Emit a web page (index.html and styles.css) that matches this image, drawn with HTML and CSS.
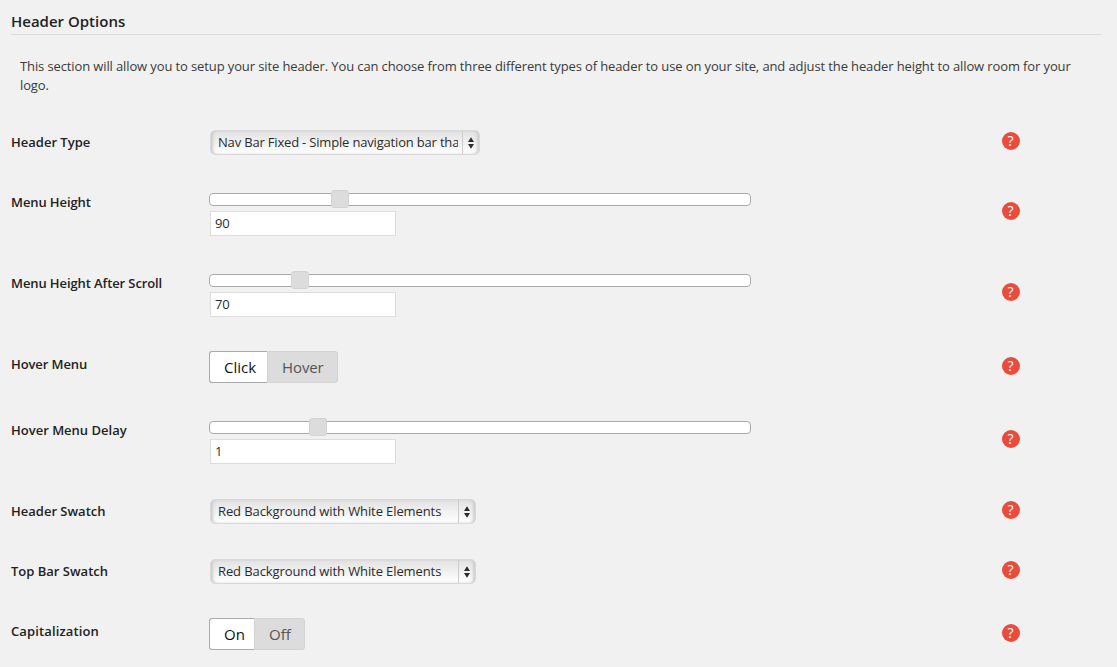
FILE: index.html
```
<!DOCTYPE html>
<html lang="en">
<head>
<meta charset="utf-8">
<title>Header Options</title>
<link rel="stylesheet" href="styles.css">
</head>
<body>
<main class="options">
  <h3 class="title">Header Options</h3>
  <p class="intro">This section will allow you to setup your site header. You can choose from three different types of header to use on your site, and adjust the header height to allow room for your logo.</p>
  <div class="row row-select">
    <div class="label">Header Type</div>
    <div class="control"><div class="select select-wide"><span class="value">Nav Bar Fixed - Simple navigation bar tha</span><span class="arrows"><svg width="6" height="12" viewBox="0 0 6 12"><path d="M3 .3 6 5H0zM3 11.7 0 7h6z"/></svg></span></div></div>
    <div class="help">?</div>
  </div>
  <div class="row row-slider">
    <div class="label tight">Menu Height</div>
    <div class="control"><div class="slider"><i class="handle" style="left:121px"></i></div><div class="input">90</div></div>
    <div class="help">?</div>
  </div>
  <div class="row row-slider">
    <div class="label tight">Menu Height After Scroll</div>
    <div class="control"><div class="slider"><i class="handle" style="left:81px"></i></div><div class="input">70</div></div>
    <div class="help">?</div>
  </div>
  <div class="row row-toggle">
    <div class="label tight">Hover Menu</div>
    <div class="control"><div class="toggle"><span class="on on-wide">Click</span><span class="off off-wide">Hover</span></div></div>
    <div class="help">?</div>
  </div>
  <div class="row row-slider">
    <div class="label">Hover Menu Delay</div>
    <div class="control"><div class="slider"><i class="handle" style="left:99px"></i></div><div class="input">1</div></div>
    <div class="help">?</div>
  </div>
  <div class="row row-select">
    <div class="label">Header Swatch</div>
    <div class="control"><div class="select"><span class="value">Red Background with White Elements</span><span class="arrows"><svg width="6" height="12" viewBox="0 0 6 12"><path d="M3 .3 6 5H0zM3 11.7 0 7h6z"/></svg></span></div></div>
    <div class="help">?</div>
  </div>
  <div class="row row-select">
    <div class="label">Top Bar Swatch</div>
    <div class="control"><div class="select"><span class="value">Red Background with White Elements</span><span class="arrows"><svg width="6" height="12" viewBox="0 0 6 12"><path d="M3 .3 6 5H0zM3 11.7 0 7h6z"/></svg></span></div></div>
    <div class="help">?</div>
  </div>
  <div class="row row-toggle">
    <div class="label loose">Capitalization</div>
    <div class="control"><div class="toggle"><span class="on">On</span><span class="off">Off</span></div></div>
    <div class="help">?</div>
  </div>
</main>
</body>
</html>
```
FILE: styles.css
```
* { box-sizing: border-box; }
body { margin: 0; height: 667px; overflow: hidden; background: #f1f1f1; color: #3a3a3a; font: 13px/19px "Open Sans", sans-serif; }
.options { padding: 9px 15px 0 11px; }
.title { margin: 0; height: 26px; border-bottom: 1px solid #dcdcdc; color: #222; font-size: 15px; line-height: 24px; font-weight: 600; }
.intro { margin: 22px 0 0 9px; width: 1068px; height: 38px; letter-spacing: -0.117px; }
.row { display: grid; grid-template-columns: 198px 793px 18px; align-items: start; padding-top: 9px; }
.row-select { height: 60px; }
.row-slider { height: 81px; }
.row-toggle { height: 66px; }
.intro + .row { margin-top: 28px; }
.label { color: #222; font-weight: 600; line-height: 20px; }
.tight { letter-spacing: -0.1px; }
.loose { letter-spacing: 0.12px; }
.select { display: flex; width: 266px; height: 25px; margin: -2px 0 0 1px; border: 1px solid #d9d9d9; border-radius: 5px; background: linear-gradient(#e2e2e2, #f1f1f1 50%, #fff); box-shadow: inset 3px 0 3px -1px #ccc, inset -3px 0 3px -1px #ccc; color: #2c2c2c; }
.select-wide { width: 270px; }
.value { flex: 1; margin: 0 4px 0 7px; overflow: hidden; white-space: nowrap; line-height: 23px; letter-spacing: -0.1px; }
.select-wide .value { letter-spacing: -0.18px; }
.arrows { display: flex; width: 17px; padding-right: 1px; border-left: 1px solid #ccc; align-items: center; justify-content: center; }
.arrows path { fill: #2c2c2c; }
.slider { position: relative; width: 542px; height: 13px; margin-top: 1px; border: 1px solid #aaa; border-radius: 4px; background: #fff; }
.handle { position: absolute; top: -4px; width: 18px; height: 18px; border: 1px solid #d3d3d3; border-radius: 3px; background: #dcdcdc; }
.input { width: 186px; height: 25px; margin: 5px 0 0 1px; padding: 0 4px; border: 1px solid #ddd; background: #fff; color: #2c2c2c; line-height: 23px; letter-spacing: -0.2px; }
.toggle { display: flex; width: max-content; height: 32px; margin-top: -3px; font-size: 15px; line-height: 31px; }
.on, .off { width: 45px; padding-left: 14px; border: 1px solid #aaa; border-right: 0; border-radius: 3px 0 0 3px; background: #fff; color: #111; }
.off { width: 51px; border: 1px solid #d3d3d3; border-radius: 0 3px 3px 0; background: #dcdcdc; color: #555; }
.on-wide { width: 58px; }
.off-wide { width: 71px; letter-spacing: -0.1px; }
.help { width: 18px; height: 18px; margin-left: -0.5px; border-radius: 9px; background: #e94c3d; color: #fff; text-align: center; font-size: 14px; font-weight: 400; line-height: 18px; }
.row-slider .help { margin-top: 10px; }
.row-toggle .help { margin-top: 3px; }
```
